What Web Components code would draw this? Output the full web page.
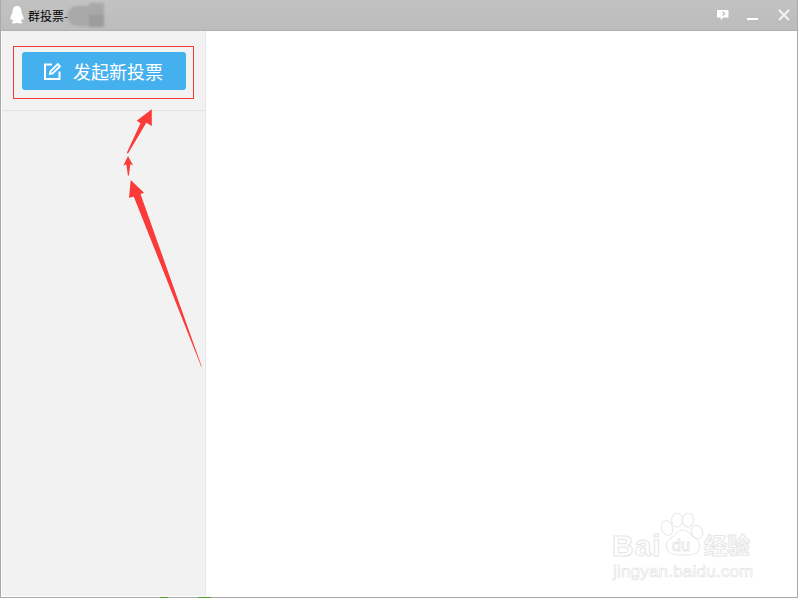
<!DOCTYPE html>
<html>
<head>
<meta charset="utf-8">
<title>群投票</title>
<style>
    html, body { margin: 0; height: 100%; background: #fff; }
    body { font-family: "Liberation Sans", "Noto Sans CJK SC", sans-serif; overflow: hidden; }
</style>
</head>
<body>
<vote-window>
    <title-bar slot="title" window-title="群投票-"></title-bar>
    <side-panel slot="side">
        <new-vote-button>发起新投票</new-vote-button>
    </side-panel>
    <baidu-watermark slot="main"></baidu-watermark>
</vote-window>
<arrow-notes></arrow-notes>
<script>
class VoteWindow extends HTMLElement {
    constructor() {
        super();
        this.attachShadow({ mode: 'open' });
        this.shadowRoot.innerHTML = `
            <style>
                :host {
                    display: flex;
                    flex-direction: column;
                    width: 798px;
                    height: 598px;
                    box-sizing: border-box;
                    border-left: 1px solid #a9a9a9;
                    border-right: 1px solid #a9a9a9;
                    background: #fff;
                }
                #body {
                    flex-grow: 1;
                    display: flex;
                    min-height: 0;
                    padding-left: 1px;
                }
                #main {
                    flex-grow: 1;
                    position: relative;
                    background: #fff;
                }
                #edge {
                    height: 2px;
                    background: linear-gradient(90deg, #a9a9a9 0 159px, #4f9a2c 159px 167px, #a9a9a9 167px 197px, #4f9a2c 197px 210px, #a9a9a9 210px);
                    background-size: 100% 1px;
                    background-repeat: no-repeat;
                    background-position: bottom;
                }
            </style>
            <slot name="title"></slot>
            <div id="body">
                <slot name="side"></slot>
                <div id="main"><slot name="main"></slot></div>
            </div>
            <div id="edge"></div>
        `;
    }
}
customElements.define('vote-window', VoteWindow);

class TitleBar extends HTMLElement {
    constructor() {
        super();
        this.attachShadow({ mode: 'open' });
        this.shadowRoot.innerHTML = `
            <style>
                :host {
                    display: flex;
                    align-items: center;
                    height: 31px;
                    flex-shrink: 0;
                    background: linear-gradient(#c2c2c2, #bcbcbc);
                    border-bottom: 1px solid #b0b0b0;
                    box-sizing: border-box;
                    padding-left: 9px;
                    color: #000;
                }
                #icon { width: 14px; height: 18px; margin-right: 4px; }
                #title {
                    font: 12px "Noto Sans CJK SC", sans-serif;
                    line-height: 31px;
                }
                #blur {
                    width: 37px;
                    height: 24px;
                    margin-left: -1px;
                    margin-top: -1px;
                    filter: blur(1px);
                    background:
                        linear-gradient(#a8a8a8, #a8a8a8) 22px 0 / 15px 12px no-repeat,
                        linear-gradient(#9c9c9c, #9c9c9c) 22px 12px / 15px 12px no-repeat;
                    position: relative;
                }
                #blur::before {
                    content: "";
                    position: absolute;
                    left: 0;
                    top: 3px;
                    width: 22px;
                    height: 20px;
                    border-radius: 10px 0 0 10px;
                    background: #a9a9a9;
                }
                #space { flex-grow: 1; }
                .button { display: block; flex-shrink: 0; }
            </style>
            <svg id="icon" viewBox="0 0 14 18">
                <path fill="#fff" d="M7 0C3.900 0 2.600 2.400 2.600 5c0 .8 0 1.400-.2 2C1.400 8.800.4 10.600.4 12.800c0 1.200.5 1.500 1.600.3.300.9.700 1.600 1.300 2.200-1 .4-1.700.9-1.500 1.500.2.800 2.300.9 3.600.5.500-.2 1-.3 1.600-.3s1.100.1 1.600.3c1.300.4 3.400.3 3.600-.5.200-.6-.5-1.100-1.500-1.500.6-.6 1-1.300 1.300-2.200 1.100 1.200 1.600.9 1.600-.3 0-2.200-1-4-2-5.800-.2-.6-.2-1.200-.2-2C11.400 2.400 10.100 0 7 0z"/>
            </svg>
            <span id="title"></span>
            <div id="blur"></div>
            <div id="space"></div>
            <svg class="button" width="14" height="14" viewBox="0 0 14 14" style="margin-right:17px">
                <path fill="#fff" d="M1 2h11.500v7.500H7L4.800 12.500V9.500H1z"/>
                <path fill="none" stroke="#bdbdbd" stroke-width="1.200" d="M6.500 3.800 8.600 5.700 6.500 7.600"/>
            </svg>
            <svg class="button" width="12" height="14" viewBox="0 0 12 14" style="margin-right:19px">
                <rect x="0" y="10" width="11" height="2" fill="#fff"/>
            </svg>
            <svg class="button" width="12" height="12" viewBox="0 0 12 12" style="margin-right:7px">
                <path stroke="#f4f4f4" stroke-width="1.800" d="M1 1 11 11M11 1 1 11"/>
            </svg>
        `;
    }
    connectedCallback() {
        this.shadowRoot.getElementById("title").textContent = this.getAttribute("window-title") ?? "";
    }
}
customElements.define('title-bar', TitleBar);

class SidePanel extends HTMLElement {
    constructor() {
        super();
        this.attachShadow({ mode: 'open' });
        this.shadowRoot.innerHTML = `
            <style>
                :host {
                    display: block;
                    width: 203px;
                    height: 100%;
                    background: #f2f2f2;
                    border-right: 1px solid #e6e6e6;
                }
                #top {
                    padding: 21px 19px 20px 20px;
                    border-bottom: 1px solid #e2e2e2;
                }
            </style>
            <div id="top"><slot></slot></div>
        `;
    }
}
customElements.define('side-panel', SidePanel);

class NewVoteButton extends HTMLElement {
    constructor() {
        super();
        this.attachShadow({ mode: 'open' });
        this.shadowRoot.innerHTML = `
            <style>
                :host {
                    display: flex;
                    align-items: center;
                    height: 38px;
                    box-sizing: border-box;
                    padding-left: 21px;
                    background: #45b0ee;
                    border-radius: 3px;
                    color: #fff;
                    font: 18px "Noto Sans CJK SC", sans-serif;
                    cursor: pointer;
                }
                svg { margin-right: 11px; flex-shrink: 0; }
            </style>
            <svg width="19" height="19" viewBox="0 0 19 19" fill="none" stroke="#fff">
                <path stroke-width="2" d="M9 2.500H2V17H16.500V9.500"/>
                <path stroke-width="1.800" d="M7 12 7.500 9.300 14.800 2 17 4.200 9.700 11.500z"/>
            </svg>
            <slot></slot>
        `;
    }
}
customElements.define('new-vote-button', NewVoteButton);

class BaiduWatermark extends HTMLElement {
    constructor() {
        super();
        this.attachShadow({ mode: 'open' });
        this.shadowRoot.innerHTML = `
            <style>
                :host {
                    position: absolute;
                    left: 406px;
                    top: 482px;
                    width: 145px;
                    height: 70px;
                    color: #fff;
                    -webkit-text-stroke: 1px #e6e6e6;
                    font-family: "Liberation Sans", "Noto Sans CJK SC", sans-serif;
                }
                span { position: absolute; white-space: nowrap; line-height: 1; }
                #bai { left: 0; top: 18px; font-size: 30px; font-weight: bold; letter-spacing: 1px; }
                #jy { left: 92px; top: 20px; font-size: 23px; font-family: "Noto Sans CJK SC", sans-serif; font-weight: bold; }
                #url { left: 1px; top: 50px; font-size: 17px; letter-spacing: .2px; -webkit-text-stroke-width: .7px; }
                svg { position: absolute; left: 48px; top: 0; }
                text { -webkit-text-stroke: 0; }
            </style>
            <span id="bai">Bai</span>
            <svg width="46" height="48" viewBox="0 0 46 48" fill="#fff" stroke="#e6e6e6" stroke-width="1">
                <ellipse cx="7" cy="15" rx="5.500" ry="7.500" transform="rotate(-20 7 15)"/>
                <ellipse cx="17" cy="7" rx="5.500" ry="7"/>
                <ellipse cx="28" cy="7" rx="5.500" ry="7" transform="rotate(8 28 7)"/>
                <ellipse cx="37" cy="19" rx="5.500" ry="7" transform="rotate(-25 37 19)"/>
                <path d="M23 17c5 0 7 5 12 8 5 3 6 9 3 13-2 3-6 4-15 4s-13-1-15-4c-3-4-2-10 3-13 5-3 7-8 12-8z"/>
                <text x="12" y="38" font-size="16" font-family="Liberation Sans" fill="#fff" stroke="#e6e6e6" stroke-width=".8">du</text>
            </svg>
            <span id="jy">经验</span>
            <span id="url">jingyan.baidu.com</span>
        `;
    }
}
customElements.define('baidu-watermark', BaiduWatermark);

class ArrowNotes extends HTMLElement {
    constructor() {
        super();
        this.attachShadow({ mode: 'open' });
        this.shadowRoot.innerHTML = `
            <style>
                :host {
                    position: absolute;
                    left: 0;
                    top: 0;
                    width: 798px;
                    height: 598px;
                    pointer-events: none;
                }
                svg { display: block; }
            </style>
            <svg width="798" height="598" viewBox="0 0 798 598">
                <rect x="13.500" y="46.500" width="180" height="52" fill="none" stroke="#f23b3b" stroke-width="1"/>
                <g fill="#fb3a3a">
                    <polygon points="151.800,109.300 151.800,126 146.300,122.800 128,153.500 126.800,152.800 140.500,123.300 136.700,120.700"/>
                    <polygon points="128,156 133,165.300 130.300,164.300 128.900,175.500 127.900,175.500 126.300,164.300 123.300,165.800"/>
                    <polygon points="130.700,180 144,192.700 140.500,194 201.800,366.800 201.300,366.800 133.800,196.700 129,197.700"/>
                </g>
            </svg>
        `;
    }
}
customElements.define('arrow-notes', ArrowNotes);
</script>
</body>
</html>
